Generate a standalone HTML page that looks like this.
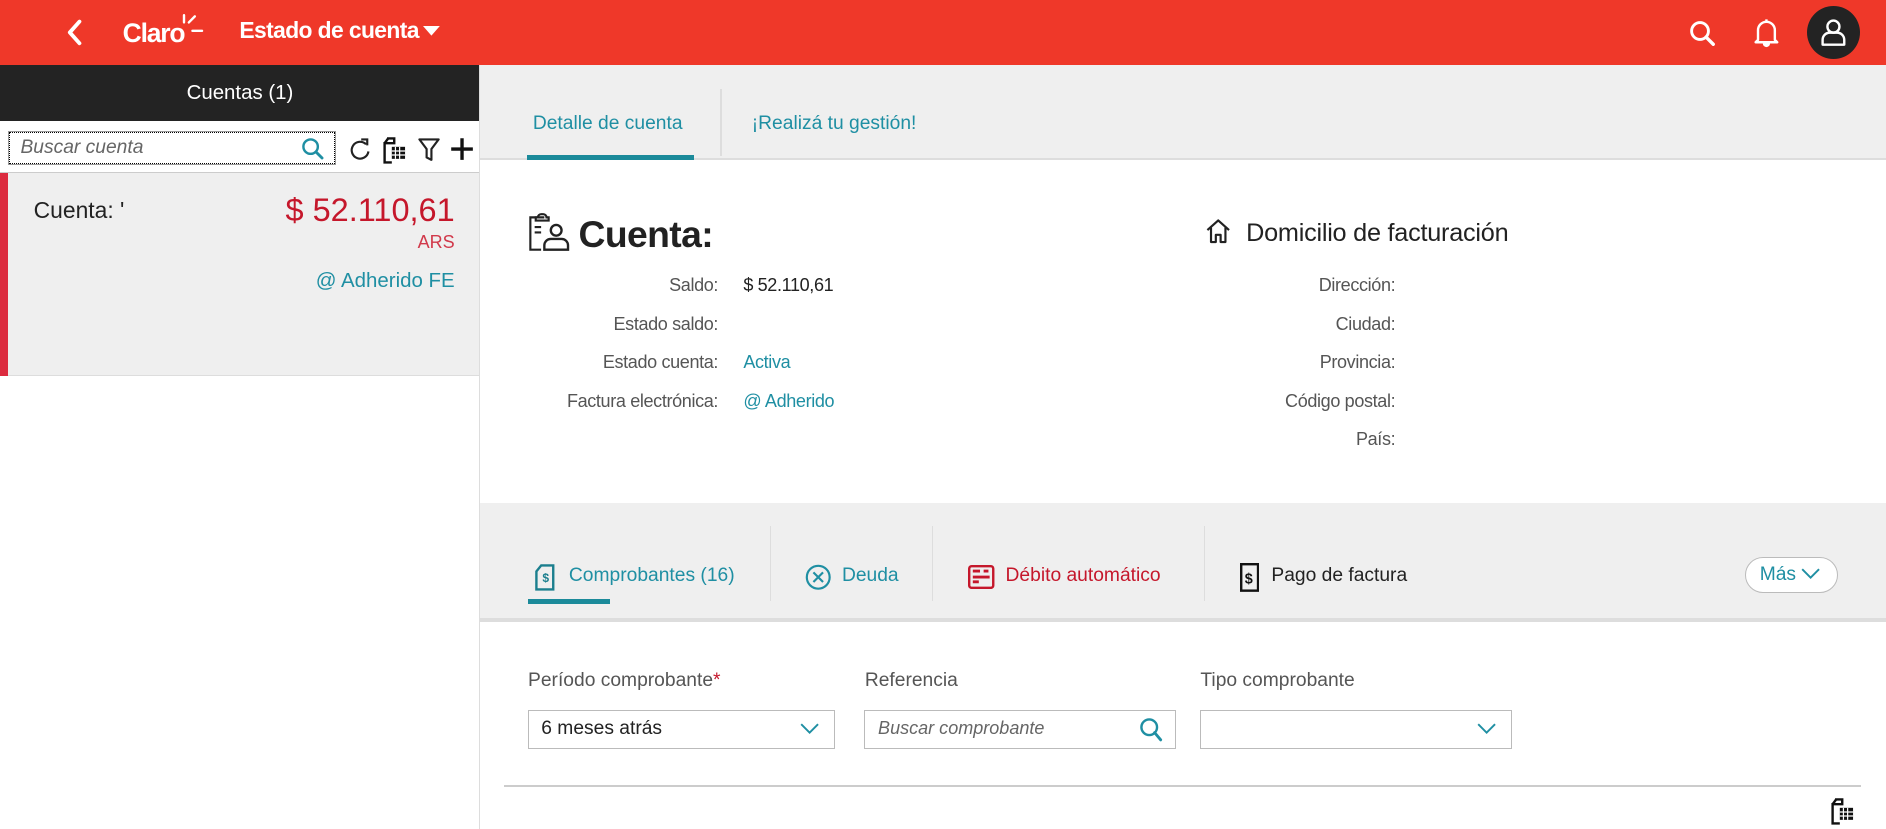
<!DOCTYPE html>
<html><head><meta charset="utf-8"><style>
*{box-sizing:border-box;margin:0;padding:0}
html,body{width:1886px;height:829px;overflow:hidden;background:#fff}
#w{zoom:1.20281;width:1568px;height:689px;position:relative;font-family:"Liberation Sans",sans-serif;color:#333;overflow:hidden}
.a{position:absolute;white-space:nowrap}
.teal{color:#1f8fa3}
.lbl{position:absolute;text-align:right;font-size:15px;color:#555;letter-spacing:-.3px}
.val{position:absolute;font-size:15px;letter-spacing:-.3px}
.sep{position:absolute;width:1px;background:#ddd}
</style></head><body><div id="w">
<div class="a" style="left:0;top:0;width:1568px;height:54px;background:#ef3829"></div>
<svg class="a" style="left:54px;top:15px" width="16" height="24" viewBox="0 0 16 24"><path d="M12 3 L4 12 L12 21" stroke="#fff" stroke-width="3.2" fill="none" stroke-linecap="round" stroke-linejoin="round"/></svg>
<div class="a" style="left:102px;top:15px;color:#fff;font-size:22px;font-weight:bold;letter-spacing:-1px">Claro</div>
<svg class="a" style="left:148px;top:12px" width="24" height="22" viewBox="0 0 24 22"><path d="M5 1v6M9 7l5-5M12 14h8" stroke="#fff" stroke-width="2" stroke-linecap="round"/></svg>
<div class="a" style="left:199px;top:14px;color:#fff;font-size:19px;font-weight:bold;letter-spacing:-.5px">Estado de cuenta</div>
<svg class="a" style="left:352px;top:22px" width="14" height="9"><path d="M0 0h14L7 8z" fill="#fff"/></svg>
<svg class="a" style="left:1403px;top:16px" width="24" height="24" viewBox="0 0 24 24"><circle cx="10" cy="10" r="7" stroke="#fff" stroke-width="2.4" fill="none"/><path d="M15 15l6 6" stroke="#fff" stroke-width="2.8" stroke-linecap="round"/></svg>
<svg class="a" style="left:1457px;top:14px" width="24" height="26" viewBox="0 0 24 26"><path d="M12 2v2M5 19V11a7 7 0 0 1 14 0v8l2 2H3z" stroke="#fff" stroke-width="2" fill="none" stroke-linejoin="round"/><path d="M9 22a3 3 0 0 0 6 0" fill="#fff"/></svg>
<div class="a" style="left:1502px;top:5px;width:44px;height:44px;border-radius:50%;background:#232323"></div>
<svg class="a" style="left:1512px;top:14px" width="24" height="26" viewBox="0 0 24 26"><circle cx="12" cy="8" r="5" stroke="#fff" stroke-width="2" fill="none"/><path d="M3 23v-4a6 6 0 0 1 6-6h6a6 6 0 0 1 6 6v4z" stroke="#fff" stroke-width="2" fill="none" stroke-linejoin="round"/></svg>
<div class="a" style="left:0;top:54px;width:399px;height:47px;background:#232323"></div>
<div class="a" style="left:0;top:67px;width:399px;text-align:center;color:#fff;font-size:17px">Cuentas (1)</div>
<div class="a" style="left:398px;top:54px;width:1px;height:635px;background:#ddd"></div>
<div class="a" style="left:7px;top:109px;width:272px;height:28px;border:1px solid #999;outline:1px dotted #000;outline-offset:-2px"></div>
<div class="a" style="left:17px;top:114px;font-size:16px;font-style:italic;color:#666">Buscar cuenta</div>
<svg class="a" style="left:250px;top:114px" width="20" height="20" viewBox="0 0 20 20"><circle cx="8" cy="8" r="6" stroke="#1f8fa3" stroke-width="2" fill="none"/><path d="M12.5 12.5l5 5" stroke="#1f8fa3" stroke-width="2.4" stroke-linecap="round"/></svg>
<svg class="a" style="left:289px;top:114px" width="20" height="22" viewBox="0 0 20 22"><path d="M15 6A7 7 0 1 0 17 12" stroke="#222" stroke-width="1.8" fill="none"/><path d="M11 2h5v5" stroke="#222" stroke-width="1.8" fill="none"/></svg>
<svg class="a" style="left:317px;top:113px" width="22" height="24" viewBox="0 0 22 24"><path d="M5 2h6v4H3v16h6" stroke="#111" stroke-width="2" fill="none"/><path d="M3 6l3-4" stroke="#111" stroke-width="2"/><rect x="9" y="9" width="11" height="10" fill="#111"/><path d="M12 9v10M15.5 9v10M9 12.5h11M9 15.8h11" stroke="#fff" stroke-width="1"/></svg>
<svg class="a" style="left:347px;top:114px" width="20" height="22" viewBox="0 0 20 22"><path d="M2 2h16l-6 8v9l-4-2v-7z" stroke="#222" stroke-width="1.8" fill="none" stroke-linejoin="round"/></svg>
<svg class="a" style="left:374px;top:114px" width="20" height="20"><path d="M10 1v18M1 10h18" stroke="#111" stroke-width="2.8"/></svg>
<div class="a" style="left:0;top:143px;width:398px;height:1px;background:#ccc"></div>
<div class="a" style="left:0;top:144px;width:398px;height:169px;background:#efefef;border-bottom:1px solid #ddd"></div>
<div class="a" style="left:0;top:144px;width:7px;height:169px;background:#dc2b3f"></div>
<div class="a" style="left:28px;top:164px;font-size:19px;color:#222">Cuenta: '</div>
<div class="a" style="right:1190px;top:160px;font-size:27px;color:#c5172b">$ 52.110,61</div>
<div class="a" style="right:1190px;top:193px;font-size:15px;color:#d1394b">ARS</div>
<div class="a" style="right:1190px;top:224px;font-size:17px"><span class="teal">@ Adherido FE</span></div>
<div class="a" style="left:399px;top:54px;width:1169px;height:77px;background:#efefef"></div>
<div class="a" style="left:399px;top:131px;width:1169px;height:2px;background:#ddd"></div>
<div class="a teal" style="left:443px;top:94px;font-size:16px">Detalle de cuenta</div>
<div class="a" style="left:438px;top:129px;width:139px;height:4px;background:#1b8a9a"></div>
<div class="sep" style="left:599px;top:74px;height:56px"></div>
<div class="a teal" style="left:625px;top:94px;font-size:16px">¡Realizá tu gestión!</div>
<svg class="a" style="left:438px;top:176px" width="36" height="34" viewBox="0 0 40 38"><path d="M16 5H3v30h10" stroke="#222" stroke-width="2" fill="none"/><path d="M10 5a3 3 0 0 1 3-3h2a3 3 0 0 1 3 3h2v3H8V5z" stroke="#222" stroke-width="2" fill="none"/><path d="M7 14h6M7 19h6" stroke="#222" stroke-width="2"/><circle cx="27" cy="17" r="5" stroke="#222" stroke-width="2.2" fill="none"/><path d="M16 35v-4a6 6 0 0 1 6-6h10a6 6 0 0 1 6 6v4z" stroke="#222" stroke-width="2.2" fill="none"/></svg>
<div class="a" style="left:481px;top:177px;font-size:31px;font-weight:bold;color:#222;letter-spacing:-.5px">Cuenta:</div>
<div class="lbl" style="right:971px;top:229px">Saldo:</div><div class="val" style="left:618px;top:229px;color:#222">$ 52.110,61</div>
<div class="lbl" style="right:971px;top:261px">Estado saldo:</div>
<div class="lbl" style="right:971px;top:293px">Estado cuenta:</div><div class="val teal" style="left:618px;top:293px">Activa</div>
<div class="lbl" style="right:971px;top:325px">Factura electrónica:</div><div class="val teal" style="left:618px;top:325px">@ Adherido</div>
<svg class="a" style="left:1002px;top:181px" width="22" height="22" viewBox="0 0 22 22"><path d="M2 10L11 2l9 8M5 8v12h4v-6h4v6h4V8" stroke="#222" stroke-width="1.8" fill="none" stroke-linejoin="round"/></svg>
<div class="a" style="left:1036px;top:182px;font-size:21px;color:#222;letter-spacing:-.2px">Domicilio de facturación</div>
<div class="lbl" style="right:408px;top:229px">Dirección:</div>
<div class="lbl" style="right:408px;top:261px">Ciudad:</div>
<div class="lbl" style="right:408px;top:293px">Provincia:</div>
<div class="lbl" style="right:408px;top:325px">Código postal:</div>
<div class="lbl" style="right:408px;top:357px">País:</div>
<div class="a" style="left:399px;top:418px;width:1169px;height:96px;background:#efefef"></div>
<div class="a" style="left:399px;top:514px;width:1169px;height:3px;background:#ddd"></div>
<svg class="a" style="left:444px;top:468px" width="18" height="24" viewBox="0 0 18 24"><path d="M6 2h10v20H2V7z" stroke="#1b7f8e" stroke-width="2" fill="none"/><text x="7" y="16" font-size="10" font-weight="bold" fill="#1b7f8e" font-family="Liberation Sans">$</text></svg>
<div class="a teal" style="left:473px;top:470px;font-size:16px">Comprobantes (16)</div>
<div class="a" style="left:439px;top:498px;width:68px;height:4px;background:#1b8a9a"></div>
<div class="sep" style="left:640px;top:437px;height:63px"></div>
<svg class="a" style="left:669px;top:469px" width="22" height="22"><circle cx="11" cy="11" r="9.5" stroke="#1f8fa3" stroke-width="1.8" fill="none"/><path d="M7 7l8 8M15 7l-8 8" stroke="#1f8fa3" stroke-width="1.8"/></svg>
<div class="a teal" style="left:700px;top:470px;font-size:16px">Deuda</div>
<div class="sep" style="left:775px;top:437px;height:63px"></div>
<svg class="a" style="left:805px;top:470px" width="22" height="20" viewBox="0 0 22 20"><rect x="1" y="1" width="20" height="18" rx="2" stroke="#c5172b" stroke-width="2" fill="none"/><path d="M4 5h6M13 5h4M4 10h14M4 14h5" stroke="#c5172b" stroke-width="2.4"/></svg>
<div class="a" style="left:836px;top:470px;font-size:16px;color:#c5172b">Débito automático</div>
<div class="sep" style="left:1001px;top:437px;height:63px"></div>
<svg class="a" style="left:1031px;top:468px" width="16" height="24" viewBox="0 0 16 24"><rect x="1" y="1" width="14" height="22" stroke="#111" stroke-width="2" fill="none"/><text x="4" y="17" font-size="12" font-weight="bold" fill="#111" font-family="Liberation Sans">$</text></svg>
<div class="a" style="left:1057px;top:470px;font-size:16px;color:#222">Pago de factura</div>
<div class="a" style="left:1451px;top:463px;width:77px;height:30px;border:1px solid #bbb;border-radius:15px;background:#fff"></div>
<div class="a teal" style="left:1463px;top:469px;font-size:16px">Más</div>
<svg class="a" style="left:1497px;top:472px" width="16" height="10"><path d="M1 1l7 7 7-7" stroke="#1f8fa3" stroke-width="1.6" fill="none"/></svg>
<div class="a" style="left:439px;top:557px;font-size:16px;color:#555">Período comprobante<span style="color:#c5172b">*</span></div>
<div class="a" style="left:719px;top:557px;font-size:16px;color:#555">Referencia</div>
<div class="a" style="left:998px;top:557px;font-size:16px;color:#555">Tipo comprobante</div>
<div class="a" style="left:439px;top:590px;width:255px;height:33px;border:1px solid #bbb"></div>
<div class="a" style="left:450px;top:597px;font-size:16px;color:#222">6 meses atrás</div>
<svg class="a" style="left:665px;top:601px" width="16" height="10"><path d="M1 1l7 7 7-7" stroke="#1f8fa3" stroke-width="1.6" fill="none"/></svg>
<div class="a" style="left:718px;top:590px;width:260px;height:33px;border:1px solid #bbb"></div>
<div class="a" style="left:730px;top:597px;font-size:15px;font-style:italic;color:#666">Buscar comprobante</div>
<svg class="a" style="left:947px;top:596px" width="20" height="22" viewBox="0 0 20 22"><circle cx="8.5" cy="8.5" r="6.5" stroke="#1f8fa3" stroke-width="2" fill="none"/><path d="M13 13l5 6" stroke="#1f8fa3" stroke-width="2.4" stroke-linecap="round"/></svg>
<div class="a" style="left:998px;top:590px;width:259px;height:33px;border:1px solid #bbb"></div>
<svg class="a" style="left:1228px;top:601px" width="16" height="10"><path d="M1 1l7 7 7-7" stroke="#1f8fa3" stroke-width="1.6" fill="none"/></svg>
<div class="a" style="left:419px;top:653px;width:1128px;height:1px;background:#ccc"></div>
<svg class="a" style="left:1521px;top:663px" width="22" height="24" viewBox="0 0 22 24"><path d="M5 2h6v4H3v16h6" stroke="#111" stroke-width="2" fill="none"/><path d="M3 6l3-4" stroke="#111" stroke-width="2"/><rect x="9" y="9" width="11" height="10" fill="#111"/><path d="M12 9v10M15.5 9v10M9 12.5h11M9 15.8h11" stroke="#fff" stroke-width="1"/></svg>
</div></body></html>
